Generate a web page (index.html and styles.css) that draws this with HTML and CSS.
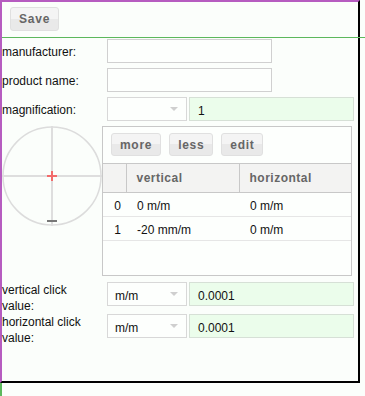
FILE: index.html
```
<!DOCTYPE html>
<html>
<head>
<meta charset="utf-8">
<link rel="stylesheet" href="styles.css">
</head>
<body>
<div class="frame">
  <div class="toolbar"><button class="btn">Save</button></div>
  <div class="form">
    <div class="row">
      <label class="lbl">manufacturer:</label>
      <div class="field"></div>
    </div>
    <div class="row">
      <label class="lbl">product name:</label>
      <div class="field"></div>
    </div>
    <div class="row">
      <label class="lbl">magnification:</label>
      <div class="select"><span class="sel-text"></span><span class="arrow"></span></div>
      <div class="num">1</div>
    </div>
    <div class="reticle-row">
      <svg class="reticle" width="100" height="100" viewBox="0 0 100 100">
        <circle cx="50" cy="50" r="49" fill="none" stroke="#dcdcdc" stroke-width="1.5"/>
        <line x1="50" y1="0" x2="50" y2="100" stroke="#dedede" stroke-width="2"/>
        <line x1="0" y1="50" x2="100" y2="50" stroke="#dedede" stroke-width="2"/>
        <line x1="45" y1="50" x2="55" y2="50" stroke="#f26b6b" stroke-width="2"/>
        <line x1="50" y1="45" x2="50" y2="55" stroke="#f26b6b" stroke-width="2"/>
        <line x1="45" y1="95" x2="55" y2="95" stroke="#777" stroke-width="2"/>
      </svg>
      <div class="panel">
        <div class="panel-bar">
          <button class="btn small">more</button>
          <button class="btn small">less</button>
          <button class="btn small">edit</button>
        </div>
        <table class="grid">
          <colgroup><col class="col-idx"><col class="col-v"><col></colgroup>
          <thead>
            <tr><th class="idx"></th><th class="c1">vertical</th><th class="c2">horizontal</th></tr>
          </thead>
          <tbody>
            <tr><td class="idx">0</td><td>0 m/m</td><td>0 m/m</td></tr>
            <tr><td class="idx">1</td><td>-20 mm/m</td><td>0 m/m</td></tr>
          </tbody>
        </table>
      </div>
    </div>
    <div class="row tall first">
      <label class="lbl wrap">vertical click value:</label>
      <div class="select"><span class="sel-text">m/m</span><span class="arrow"></span></div>
      <div class="num">0.0001</div>
    </div>
    <div class="row tall">
      <label class="lbl wrap">horizontal click value:</label>
      <div class="select"><span class="sel-text">m/m</span><span class="arrow"></span></div>
      <div class="num">0.0001</div>
    </div>
  </div>
</div>
<div class="below"></div>
</body>
</html>
```
FILE: styles.css
```
html, body {
  margin: 0;
  padding: 0;
  background: #fbfefb;
  font-family: "Liberation Sans", Arial, sans-serif;
  font-size: 12px;
  color: #111;
}
body {
  width: 365px;
  height: 396px;
  overflow: hidden;
}
.frame {
  box-sizing: border-box;
  width: 360px;
  height: 383px;
  border-top: 2px solid #b65cc0;
  border-left: 2px solid #b65cc0;
  border-right: 2px solid #000;
  border-bottom: 2px solid #000;
}
.below {
  height: 13px;
  width: 0;
  border-left: 2px solid #5cb85c;
}
.toolbar {
  box-sizing: border-box;
  height: 36px;
  padding: 5px 0 0 8px;
  border-bottom: 1px solid #5cb85c;
  margin-right: -7px;
}
.btn {
  box-sizing: border-box;
  height: 24px;
  padding: 0 8px;
  font-family: "Liberation Sans", Arial, sans-serif;
  font-size: 12px;
  font-weight: bold;
  letter-spacing: 0.8px;
  color: #666;
  border: 1px solid #e0e0e0;
  border-radius: 3px;
  background: linear-gradient(#f4f4f4 0%, #f4f4f4 50%, #e9e9e9 50%, #e9e9e9 100%);
  cursor: pointer;
}
.btn.small {
  height: 23px;
  padding: 0 8px;
  letter-spacing: 0.7px;
}
.form {
  display: flex;
  flex-direction: column;
}
.row {
  display: flex;
  align-items: flex-start;
  height: 24px;
  margin-top: 5px;
}
.row:first-child {
  margin-top: 1px;
}
.lbl {
  box-sizing: border-box;
  width: 105px;
  padding-top: 5px;
  line-height: 16px;
  flex: none;
}
.lbl.wrap {
  width: 95px;
  margin-right: 10px;
}
.field {
  box-sizing: border-box;
  width: 165px;
  height: 24px;
  border: 1px solid #d0d0d0;
  background: #fdfffd;
}
.select {
  box-sizing: border-box;
  width: 80px;
  height: 24px;
  border: 1px solid #d8d8d8;
  background: #fdfffd;
  display: flex;
  align-items: center;
  justify-content: space-between;
  padding: 0 8px 0 7px;
  flex: none;
}
.sel-text {
  padding-top: 2px;
}
.arrow {
  width: 0;
  height: 0;
  border-left: 4px solid transparent;
  border-right: 4px solid transparent;
  border-top: 4px solid #cfcfcf;
}
.num {
  box-sizing: border-box;
  width: 165px;
  height: 24px;
  margin-left: 2px;
  border: 1px solid #d6e0d6;
  background: #ebfdeb;
  padding: 5px 0 0 8px;
  line-height: 16px;
}
.reticle-row {
  display: flex;
  margin-top: 5px;
}
.reticle {
  display: block;
  flex: none;
}
.panel {
  box-sizing: border-box;
  width: 250px;
  height: 150px;
  border: 1px solid #c8c8c8;
  background: #fdfffd;
}
.panel-bar {
  display: flex;
  gap: 8px;
  padding: 6px 0 7px 8px;
}
.grid {
  width: 248px;
  border-collapse: collapse;
  table-layout: fixed;
}
.col-idx {
  width: 23px;
}
.col-v {
  width: 113px;
}
.grid th {
  height: 29px;
  box-sizing: border-box;
  background: #f3f3f2;
  border-top: 1px solid #c8c8c8;
  border-bottom: 1px solid #c8c8c8;
  text-align: left;
  font-weight: bold;
  letter-spacing: 0.5px;
  color: #666;
  padding: 0 0 0 10px;
}
.grid th.idx {
  padding: 0;
  border-right: 1px solid #c8c8c8;
}
.grid th.c1 {
  border-right: 1px solid #c8c8c8;
}
.grid td {
  height: 24px;
  box-sizing: border-box;
  border-bottom: 1px solid #e6e6e6;
  padding: 2px 0 0 11px;
  color: #111;
}
.grid td.idx {
  text-align: right;
  padding: 2px 5px 0 0;
}
.row.tall {
  height: 32px;
  margin-top: 0;
}
.row.tall.first {
  margin-top: 6px;
}
.row.tall .lbl {
  padding-top: 0;
}
.row.tall .select .sel-text {
  padding-top: 4px;
}
```
